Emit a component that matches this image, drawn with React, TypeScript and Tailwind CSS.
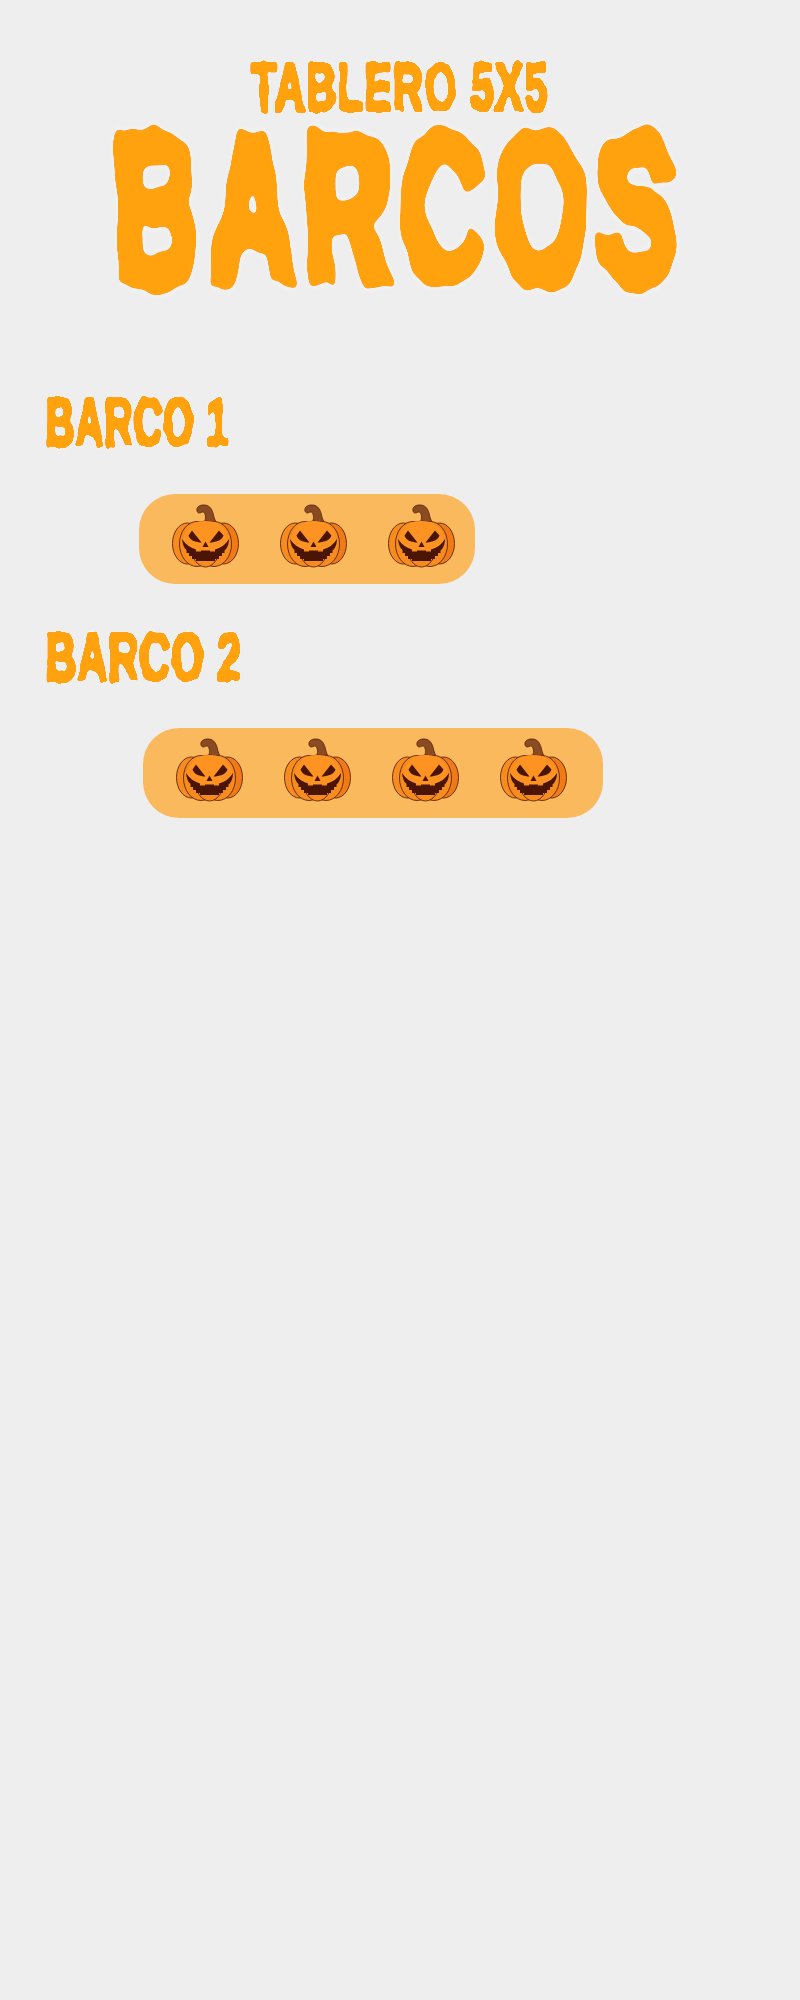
const stemColor = "#8a4a22";
const line = "#5b2408";
const dark = "#4a1505";

function Pumpkin() {
  return (
    <svg width="68" height="64" viewBox="0 0 68 64" className="mb-[7px] block shrink-0">
      {/* stem */}
      <path
        d="M25 7C24 3 28 0.500 33 1C38 1.500 40.500 6 41.500 11C42 14 43.500 17 45 20L32 20C33.500 16 34 13 33 10C32.300 8 30.500 7.500 29 8.500C27.500 9.500 25.500 9 25 7Z"
        fill={stemColor}
        stroke={line}
        strokeWidth="0.8"
      />
      {/* lobes, back to front */}
      <g fill="#f78c1e" stroke={line} strokeWidth="0.9">
        <ellipse cx="15.500" cy="39.500" rx="15" ry="20.500" />
        <ellipse cx="51.500" cy="39.500" rx="15" ry="20.500" fill="#ef7a16" />
        <ellipse cx="25" cy="40" rx="17.500" ry="22.500" />
        <ellipse cx="42" cy="40" rx="17.500" ry="22.500" />
        <ellipse cx="33.500" cy="40" rx="15" ry="23" />
      </g>
      {/* top of the face, lighter */}
      <path d="M20 20C26 16 41 16 47 20C53 25 56 31 56 37C50 44 42 47 33.500 47C25 47 16 44 11 37C12 30 15 25 20 20Z" fill="#ff9322" />
      {/* eyes and nose */}
      <path d="M16.500 31.500L20 26.500L29.500 38.500C24 38.500 18 36.500 16.500 31.500Z" fill={dark} />
      <path d="M51.500 31.500L47 26.500L37.500 38.500C43 38.500 50 36.500 51.500 31.500Z" fill={dark} />
      <path d="M33.500 37.500L36.500 43L30.500 43Z" fill={dark} />
      {/* mouth with square teeth */}
      <path
        d="M10 35C14 41 19 44 24 45.500L24 47.500L29 47.500L29 46.500L38 46.500L38 47.500L43 47.500L43 45.500C49 44 53 41 57 35C57 40 55 45 52.500 46.500L52.500 49L50 49L50 52L47 52L47 55L43 55L43 57L24 57L24 55L20 55L20 52L17 52L17 49L14.500 49L14.500 46C12 44 10.500 40 10 35Z"
        fill={dark}
      />
    </svg>
  );
}

function Boat({ count, className }: { count: number; className: string }) {
  return (
    <div className={`flex h-[90px] items-center gap-[40px] rounded-[36px] bg-[#f9b95c] pl-[33px] ${className}`}>
      {Array.from({ length: count }).map((_, i) => (
        <Pumpkin key={i} />
      ))}
    </div>
  );
}

function Heading({ children, className }: { children: string; className: string }) {
  return (
    <h2
      className={`origin-left whitespace-nowrap font-['Liberation_Sans',sans-serif] text-[66px] leading-[52px] font-bold tracking-[2px] text-[#ffa210] [filter:url(#drip-sm)] [-webkit-text-stroke:4px_#ffa210] ${className}`}
    >
      {children}
    </h2>
  );
}

export default function App() {
  return (
    <div className="min-h-[2000px] bg-[#eeeeee] pt-[62px]">
      <svg width="0" height="0" className="absolute">
        <defs>
          <filter id="drip-lg" x="-10%" y="-20%" width="120%" height="140%">
            <feTurbulence type="fractalNoise" baseFrequency="0.022 0.016" numOctaves="2" seed="4" result="n" />
            <feDisplacementMap in="SourceGraphic" in2="n" scale="24" xChannelSelector="R" yChannelSelector="G" />
            <feGaussianBlur stdDeviation="5" />
            <feComponentTransfer result="shape">
              <feFuncA type="linear" slope="16" intercept="-7.500" />
            </feComponentTransfer>
            <feGaussianBlur in="shape" stdDeviation="4" result="b" />
            <feFlood floodColor="#ffffff" floodOpacity="0.5" />
            <feComposite in2="b" operator="in" result="glow" />
            <feMerge>
              <feMergeNode in="glow" />
              <feMergeNode in="shape" />
            </feMerge>
          </filter>
          <filter id="drip-sm" x="-10%" y="-30%" width="120%" height="160%">
            <feTurbulence type="fractalNoise" baseFrequency="0.07 0.05" numOctaves="2" seed="7" result="n" />
            <feDisplacementMap in="SourceGraphic" in2="n" scale="7" xChannelSelector="R" yChannelSelector="G" />
            <feGaussianBlur stdDeviation="1.400" />
            <feComponentTransfer result="shape">
              <feFuncA type="linear" slope="12" intercept="-5.500" />
            </feComponentTransfer>
            <feGaussianBlur in="shape" stdDeviation="1.500" result="b" />
            <feFlood floodColor="#ffffff" floodOpacity="0.6" />
            <feComposite in2="b" operator="in" result="glow" />
            <feMerge>
              <feMergeNode in="glow" />
              <feMergeNode in="shape" />
            </feMerge>
          </filter>
        </defs>
      </svg>

      <h1 className="flex flex-col items-center font-['Liberation_Sans',sans-serif] font-bold text-[#ffa210]">
        <span className="h-[51px] scale-x-[0.63] whitespace-nowrap text-[66px] leading-[51px] tracking-[2px] [filter:url(#drip-sm)] [-webkit-text-stroke:4px_#ffa210]">
          TABLERO 5X5
        </span>
        <span className="mt-[14px] h-[164px] scale-x-[0.575] whitespace-nowrap text-[208px] leading-[164px] tracking-[16px] [filter:url(#drip-lg)] [-webkit-text-stroke:15px_#ffa210]">
          BARCOS
        </span>
      </h1>

      <Heading className="ml-[46px] mt-[105px] scale-x-[0.59]">BARCO 1</Heading>
      <Boat count={3} className="ml-[139px] mt-[46px] w-[336px]" />
      <Heading className="ml-[46px] mt-[47px] scale-x-[0.63]">BARCO 2</Heading>
      <Boat count={4} className="ml-[143px] mt-[45px] w-[460px]" />
    </div>
  );
}
